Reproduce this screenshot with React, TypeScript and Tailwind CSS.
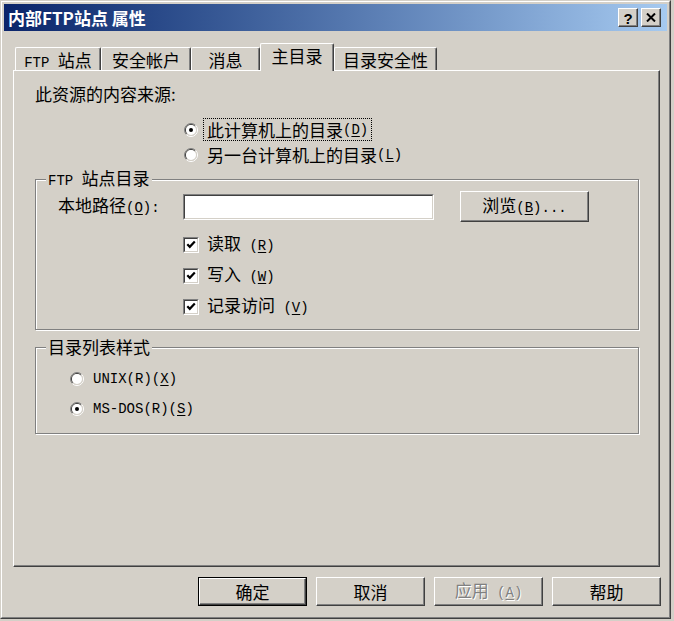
import React from "react";

function M({ c, pre = "(", post = ")" }: { c: string; pre?: string; post?: string }) {
  return (
    <span className="[font-family:'Liberation_Mono',monospace] text-[14px]">
      {pre}
      <span className="underline underline-offset-[2px]">{c}</span>
      {post}
    </span>
  );
}

function Radio({ checked }: { checked?: boolean }) {
  return (
    <svg width="14" height="14" viewBox="0 0 14 14" className="shrink-0">
      <path d="M2.4 11.6A6.5 6.5 0 0 1 11.6 2.4" fill="none" stroke="#808080" />
      <path d="M11.6 2.4A6.5 6.5 0 0 1 2.4 11.6" fill="none" stroke="#ffffff" />
      <path d="M3.1 10.9A5.5 5.5 0 0 1 10.9 3.1" fill="none" stroke="#404040" />
      <path d="M10.9 3.1A5.5 5.5 0 0 1 3.1 10.9" fill="none" stroke="#d4d0c8" />
      <circle cx="7" cy="7" r="5" fill="#ffffff" />
      {checked && <circle cx="7" cy="7" r="2" fill="#000000" />}
    </svg>
  );
}

function Check() {
  return (
    <span className="w-[16px] h-[16px] shrink-0 flex border border-t-[#808080] border-l-[#808080] border-r-white border-b-white">
      <span className="flex-1 flex items-center justify-center bg-white border border-t-[#404040] border-l-[#404040] border-r-[#d4d0c8] border-b-[#d4d0c8]">
        <svg width="10" height="9" viewBox="0 0 10 9">
          <polyline points="1.3,4.2 3.8,6.8 8.8,1.6" fill="none" stroke="#000" strokeWidth="2.2" />
        </svg>
      </span>
    </span>
  );
}

function Tab({ children, selected, className }: { children: React.ReactNode; selected?: boolean; className: string }) {
  if (selected) {
    return (
      <div
        className={
          "relative z-10 h-[28px] -mb-[1px] bg-[#d4d0c8] border-l border-t border-white border-r border-r-[#404040] shadow-[inset_-1px_0_0_#808080] rounded-tl-[2px] rounded-tr-[2px] flex justify-center pt-[2px] " +
          className
        }
      >
        {children}
      </div>
    );
  }
  return (
    <div
      className={
        "h-[23px] bg-[#d4d0c8] border-l border-t border-white border-r border-r-[#404040] shadow-[inset_-1px_0_0_#808080] rounded-tl-[2px] rounded-tr-[2px] flex justify-center pt-[2px] " +
        className
      }
    >
      {children}
    </div>
  );
}

function Btn({
  children,
  className,
  def,
  disabled,
}: {
  children: React.ReactNode;
  className: string;
  def?: boolean;
  disabled?: boolean;
}) {
  const inner = (
    <div
      className={
        "h-full w-full flex items-center justify-center border border-t-white border-l-white border-r-[#404040] border-b-[#404040] shadow-[inset_-1px_-1px_0_#808080] " +
        (disabled ? "text-[#808080] [text-shadow:1px_1px_0_#ffffff]" : "text-black")
      }
    >
      {children}
    </div>
  );
  if (def) {
    return <div className={"border border-black shrink-0 " + className}>{inner}</div>;
  }
  return <div className={"shrink-0 " + className}>{inner}</div>;
}

function TitleBtn({ children }: { children: React.ReactNode }) {
  return (
    <div className="w-[20px] h-[19px] bg-[#d4d0c8] border border-t-white border-l-white border-r-[#404040] border-b-[#404040] shadow-[inset_-1px_-1px_0_#808080] flex items-center justify-center">
      {children}
    </div>
  );
}

export default function App() {
  return (
    <div className="w-[674px] h-[621px] overflow-hidden bg-[#d4d0c8] text-black text-[17px] leading-[20px] [font-family:'Noto_Sans_CJK_SC','Noto_Sans',sans-serif]">
      <div className="w-[671px] h-[619px] border border-t-[#d4d0c8] border-l-[#d4d0c8] border-r-[#404040] border-b-[#404040]">
        <div className="h-full flex flex-col p-[2px] border border-t-white border-l-white border-r-[#808080] border-b-[#808080]">
          {/* Title bar */}
          <div className="h-[27px] shrink-0 flex items-center pl-[4px] pr-[6px] bg-linear-to-r from-[#0a246a] to-[#a6caf0]">
            <span className="text-white font-bold text-[17px] leading-[20px]">内部FTP站点 属性</span>
            <div className="ml-auto flex gap-[3px]">
              <TitleBtn>
                <span className="font-bold text-[15px] leading-[15px] [font-family:'Liberation_Sans',sans-serif] mt-[1px]">?</span>
              </TitleBtn>
              <TitleBtn>
                <svg width="10" height="9" viewBox="0 0 10 9">
                  <path d="M1 0.5 L9 8.5 M9 0.5 L1 8.5" stroke="#000" strokeWidth="2" />
                </svg>
              </TitleBtn>
            </div>
          </div>

          {/* Tabs */}
          <div className="mt-[12px] h-[27px] shrink-0 flex items-end pl-[11px]">
            <Tab className="w-[86px]">
              <span>
                <span className="[font-family:'Liberation_Mono',monospace] text-[14px]">FTP </span>站点
              </span>
            </Tab>
            <Tab className="w-[90px]">安全帐户</Tab>
            <Tab className="w-[69px]">消息</Tab>
            <Tab className="w-[74px]" selected>
              主目录
            </Tab>
            <Tab className="w-[103px]">目录安全性</Tab>
          </div>

          {/* Panel */}
          <div className="ml-[9px] w-[647px] h-[497px] shrink-0 flex flex-col pl-[21px] border border-t-white border-l-white border-r-[#404040] border-b-[#404040] shadow-[inset_-1px_-1px_0_#808080]">
            <div className="mt-[13px] h-[20px]">此资源的内容来源:</div>

            <div className="mt-[13px] ml-[149px] h-[25px] flex items-center gap-[5px]">
              <Radio checked />
              <span className="border border-dotted border-black px-[3px] h-[23px] flex items-center">
                此计算机上的目录
                <M c="D" />
              </span>
            </div>
            <div className="ml-[149px] h-[25px] flex items-center gap-[5px]">
              <Radio />
              <span className="border border-transparent px-[3px] h-[23px] flex items-center">
                另一台计算机上的目录
                <M c="L" />
              </span>
            </div>

            {/* Group 1 */}
            <div className="relative mt-[12px] w-[604px] h-[151px] shrink-0 border border-[#808080] shadow-[inset_1px_1px_0_#ffffff,1px_1px_0_#ffffff] pt-[11px]">
              <div className="absolute left-[10px] top-[-12px] px-[2px] bg-[#d4d0c8] leading-[20px]">
                <span className="[font-family:'Liberation_Mono',monospace] text-[14px]">FTP </span>站点目录
              </div>
              <div className="h-[31px] flex items-center">
                <div className="ml-[22px] w-[125px]">
                  本地路径
                  <M c="O" post="):" />
                </div>
                <div className="w-[251px] h-[26px] border border-t-[#808080] border-l-[#808080] border-r-white border-b-white">
                  <div className="h-full bg-white border border-t-[#404040] border-l-[#404040] border-r-[#d4d0c8] border-b-[#d4d0c8]" />
                </div>
                <Btn className="ml-[26px] w-[129px] h-[31px]">
                  <span>
                    浏览
                    <M c="B" post=")..." />
                  </span>
                </Btn>
              </div>
              <div className="mt-[7px] ml-[147px] flex flex-col">
                <div className="h-[31px] flex items-center gap-[8px]">
                  <Check />
                  <span>
                    读取<M c="R" pre=" (" />
                  </span>
                </div>
                <div className="h-[31px] flex items-center gap-[8px]">
                  <Check />
                  <span>
                    写入<M c="W" pre=" (" />
                  </span>
                </div>
                <div className="h-[31px] flex items-center gap-[8px]">
                  <Check />
                  <span>
                    记录访问<M c="V" pre=" (" />
                  </span>
                </div>
              </div>
            </div>

            {/* Group 2 */}
            <div className="relative mt-[17px] w-[604px] h-[87px] shrink-0 border border-[#808080] shadow-[inset_1px_1px_0_#ffffff,1px_1px_0_#ffffff] pt-[16px]">
              <div className="absolute left-[10px] top-[-11px] px-[2px] bg-[#d4d0c8] leading-[20px]">目录列表样式</div>
              <div className="ml-[34px] h-[30px] flex items-center gap-[9px]">
                <Radio />
                <span className="[font-family:'Liberation_Mono',monospace] text-[14px]">
                  UNIX(R)(<span className="underline underline-offset-[2px]">X</span>)
                </span>
              </div>
              <div className="ml-[34px] h-[30px] flex items-center gap-[9px]">
                <Radio checked />
                <span className="[font-family:'Liberation_Mono',monospace] text-[14px]">
                  MS-DOS(R)(<span className="underline underline-offset-[2px]">S</span>)
                </span>
              </div>
            </div>
          </div>

          {/* Buttons */}
          <div className="mt-[10px] h-[29px] shrink-0 flex justify-end gap-[9px] pr-[6px]">
            <Btn def className="w-[109px] h-[29px]">
              确定
            </Btn>
            <Btn className="w-[109px] h-[29px]">取消</Btn>
            <Btn disabled className="w-[109px] h-[29px]">
              <span>
                应用<M c="A" pre=" (" />
              </span>
            </Btn>
            <Btn className="w-[109px] h-[29px]">帮助</Btn>
          </div>
        </div>
      </div>
    </div>
  );
}
